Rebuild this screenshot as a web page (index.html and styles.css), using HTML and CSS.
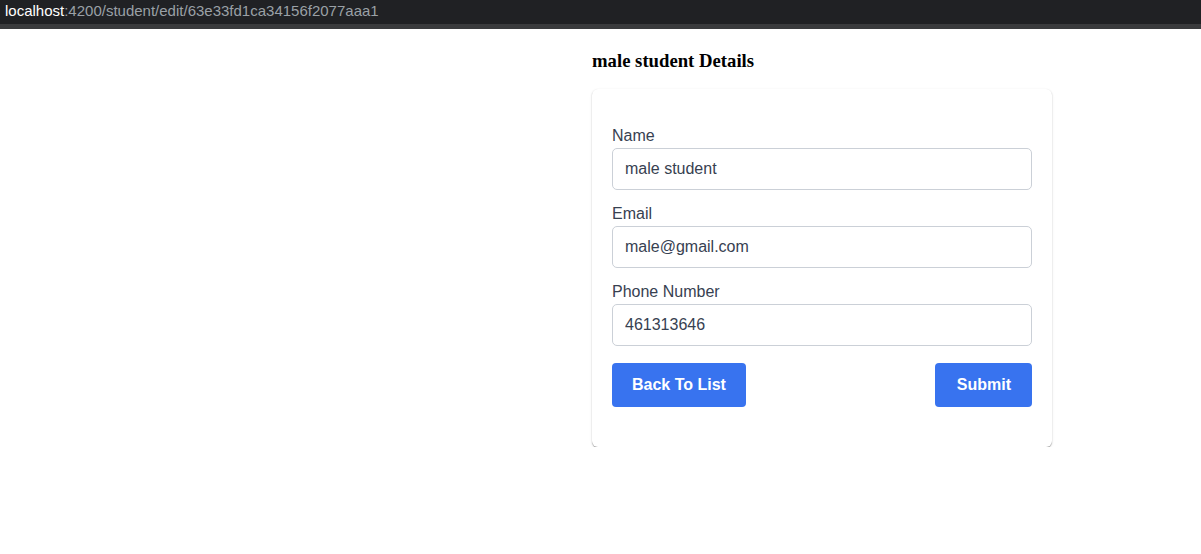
FILE: index.html
```html
<!DOCTYPE html>
<html>
<head>
<meta charset="utf-8">
<link rel="stylesheet" href="styles.css">
</head>
<body>
<div class="urlbar"><span class="host">localhost</span><span class="path">:4200/student/edit/63e33fd1ca34156f2077aaa1</span></div>
<main class="page">
  <div class="spacer"></div>
  <section class="content">
    <h3 class="title">male student Details</h3>
    <form class="card">
      <label class="label">Name</label>
      <input class="field" type="text" value="male student">
      <label class="label">Email</label>
      <input class="field" type="text" value="male@gmail.com">
      <label class="label">Phone Number</label>
      <input class="field" type="text" value="461313646">
      <div class="actions">
        <button class="btn" type="button">Back To List</button>
        <button class="btn btn-submit" type="button">Submit</button>
      </div>
    </form>
  </section>
</main>
</body>
</html>
```

FILE: styles.css
```css
html, body {
  margin: 0;
  padding: 0;
  background: #ffffff;
}
.urlbar {
  height: 24px;
  background: #202124;
  border-bottom: 5px solid #3a3b3d;
  font-family: "Liberation Sans", Arial, sans-serif;
  font-size: 15px;
  line-height: 22px;
  padding-left: 5px;
  box-sizing: content-box;
  white-space: nowrap;
}
.host { color: #ffffff; }
.path { color: #9aa0a6; }
.page {
  display: grid;
  grid-template-columns: 592px 460px;
}
.title {
  font-family: "Liberation Serif", "Times New Roman", serif;
  font-size: 18.72px;
  font-weight: bold;
  color: #000;
  margin: 21px 0 17px 0;
  line-height: 22px;
}
.card {
  background: #fff;
  border-radius: 6px;
  box-shadow: 0 0 1px rgba(0,0,0,0.06), 0 1px 1px rgba(0,0,0,0.3), 0 1px 3px rgba(0,0,0,0.1);
  padding: 35px 20px 40px 20px;
  font-family: "Liberation Sans", Arial, sans-serif;
  display: flex;
  flex-direction: column;
}
.label {
  display: block;
  font-size: 16px;
  line-height: 24px;
  color: #374151;
}
.field {
  display: block;
  box-sizing: border-box;
  width: 100%;
  height: 42px;
  margin: 0 0 12px 0;
  padding: 0 12px;
  border: 1px solid #cbd0d7;
  border-radius: 5px;
  font-family: "Liberation Sans", Arial, sans-serif;
  font-size: 16px;
  color: #374151;
  background: #fff;
  outline: none;
}
.actions {
  display: flex;
  justify-content: space-between;
  margin-top: 5px;
}
.btn {
  height: 44px;
  padding: 0 20px;
  border: none;
  border-radius: 4px;
  background: #3873ef;
  color: #fff;
  font-family: "Liberation Sans", Arial, sans-serif;
  font-size: 16px;
  font-weight: bold;
}
.btn-submit {
  padding: 0 21px 0 22px;
}
```
